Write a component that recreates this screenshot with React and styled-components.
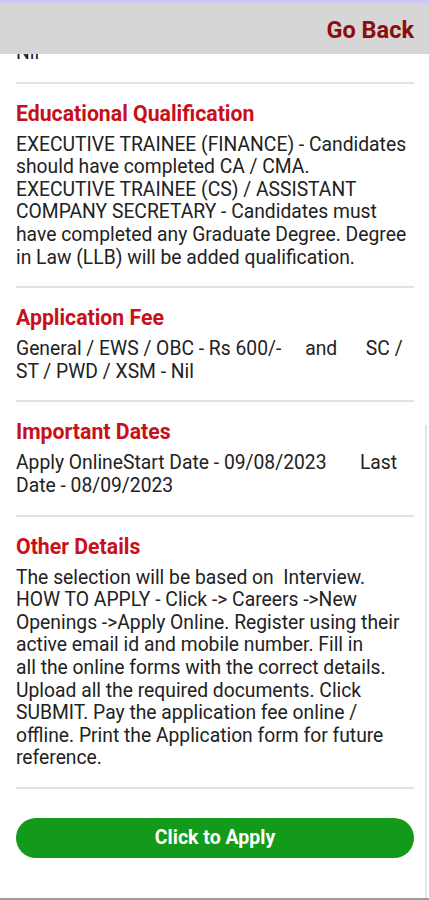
import React from "react";
import styled, { createGlobalStyle } from "styled-components";

const GlobalStyle = createGlobalStyle`
  html, body {
    margin: 0;
    padding: 0;
    background: #ffffff;
    font-family: Roboto, "Liberation Sans", Arial, sans-serif;
  }
  * {
    box-sizing: border-box;
  }
`;

const sections = [
  {
    title: "Educational Qualification",
    text:
      "EXECUTIVE TRAINEE (FINANCE) - Candidates should have completed CA / CMA.\nEXECUTIVE TRAINEE (CS) / ASSISTANT COMPANY SECRETARY - Candidates must have completed any Graduate Degree. Degree in Law (LLB) will be added qualification.",
  },
  {
    title: "Application Fee",
    text: "General / EWS / OBC - Rs 600/-     and      SC / ST / PWD / XSM - Nil",
  },
  {
    title: "Important Dates",
    text: "Apply OnlineStart Date - 09/08/2023       Last Date - 08/09/2023",
  },
  {
    title: "Other Details",
    text:
      "The selection will be based on  Interview.\nHOW TO APPLY - Click -> Careers ->New Openings ->Apply Online. Register using their active email id and mobile number. Fill in\nall the online forms with the correct details. Upload all the required documents. Click SUBMIT. Pay the application fee online / offline. Print the Application form for future reference.",
  },
];

export default function App() {
  return (
    <>
      <GlobalStyle />
      <Page>
        <Header>
          <BackLink>Go Back</BackLink>
        </Header>
        <Content>
          <Section $first>
            <Body>Nil</Body>
          </Section>
          {sections.map((s) => (
            <Section key={s.title}>
              <Title>{s.title}</Title>
              <Body>{s.text}</Body>
            </Section>
          ))}
          <ApplyButton>Click to Apply</ApplyButton>
        </Content>
        <ScrollThumb />
      </Page>
    </>
  );
}

const Page = styled.div`
  position: relative;
  width: 429px;
  height: 900px;
  overflow: hidden;
  border-bottom: 2px solid #9a9a9a;
`;

const Header = styled.div`
  position: absolute;
  top: 0;
  left: 0;
  right: 0;
  z-index: 2;
  height: 54px;
  background: #d6d6d6;
  border-top: 3px solid #cfc6f5;
  display: flex;
  align-items: center;
  justify-content: flex-end;
  padding: 0 15px 0 0;
`;

const BackLink = styled.span`
  color: #8c0c10;
  font-size: 23.5px;
  font-weight: 700;
  padding-top: 2px;
`;

const Content = styled.div`
  padding: 42px 15px 0 16px;
`;

const Section = styled.div`
  padding: ${(p) => (p.$first ? "0" : "18px")} 0 17px;
  border-bottom: 2px solid #e3e3e3;
`;

const Title = styled.div`
  color: #c8101a;
  font-size: 21.25px;
  font-weight: 700;
  line-height: 24px;
  margin-bottom: 8px;
`;

const Body = styled.div`
  color: #222222;
  font-size: 19.3px;
  line-height: 22.6px;
  white-space: pre-wrap;
`;

const ApplyButton = styled.button`
  display: block;
  width: 100%;
  height: 40px;
  margin-top: 29px;
  border: none;
  border-radius: 20px;
  background: #149a1a;
  color: #ffffff;
  font-family: Roboto, "Liberation Sans", Arial, sans-serif;
  font-size: 19.5px;
  font-weight: 700;
`;

const ScrollThumb = styled.div`
  position: absolute;
  right: 2px;
  top: 425px;
  bottom: 0;
  width: 2px;
  background: #e4e4e4;
`;
